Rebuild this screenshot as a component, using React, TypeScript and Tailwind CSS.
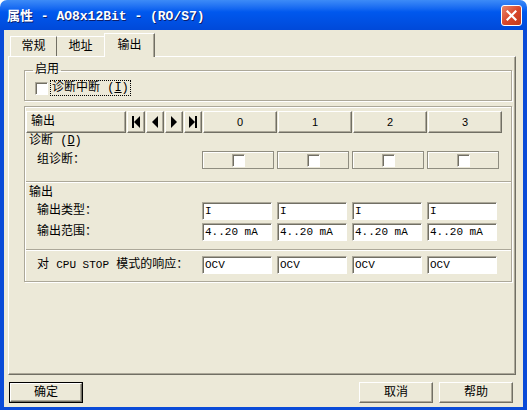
import type { ReactNode } from 'react';

const FONT = "font-['Liberation_Mono','Noto_Sans_CJK_SC',monospace]";

const COLUMNS = ['0', '1', '2', '3'];

function Raised({ children, className = '' }: { children?: ReactNode; className?: string }) {
  return (
    <div
      className={`flex items-center bg-[#ECE9D8] border border-t-white border-l-white border-b-[#716F64] border-r-[#716F64] shadow-[inset_-1px_-1px_0_#ACA899] ${className}`}
    >
      {children}
    </div>
  );
}

function Field({ value }: { value: string }) {
  return (
    <div className="w-[70px] h-[18px] bg-white border border-t-[#ACA899] border-l-[#ACA899] border-b-white border-r-white shadow-[inset_1px_1px_0_#716F64] pl-[2px] flex items-center">
      <span className="font-['Liberation_Mono',monospace] text-[11px] leading-none text-black">{value}</span>
    </div>
  );
}

function CheckBox() {
  return (
    <div className="w-[13px] h-[13px] bg-white border border-t-[#ACA899] border-l-[#ACA899] border-b-white border-r-white shadow-[inset_1px_1px_0_#716F64]" />
  );
}

function NavIcon({ kind }: { kind: 'first' | 'prev' | 'next' | 'last' }) {
  return (
    <svg width="10" height="12" viewBox="0 0 10 12">
      {kind === 'first' && (
        <>
          <rect x="1" y="0" width="2" height="12" fill="#000" />
          <polygon points="9,0 3,6 9,12" fill="#000" />
        </>
      )}
      {kind === 'prev' && <polygon points="8,0 2,6 8,12" fill="#000" />}
      {kind === 'next' && <polygon points="2,0 8,6 2,12" fill="#000" />}
      {kind === 'last' && (
        <>
          <polygon points="1,0 7,6 1,12" fill="#000" />
          <rect x="7" y="0" width="2" height="12" fill="#000" />
        </>
      )}
    </svg>
  );
}

function Row({ label, values, indent = true }: { label: ReactNode; values: string[]; indent?: boolean }) {
  return (
    <div className="grid grid-cols-[176px_75px_75px_75px_75px] h-[18px] items-center">
      <span className={`text-[12px] leading-none ${indent ? 'pl-[11px]' : 'pl-[3px]'}`}>{label}</span>
      {values.map((value, index) => (
        <Field key={index} value={value} />
      ))}
    </div>
  );
}

export default function App() {
  return (
    <div className={`w-[527px] h-[410px] flex flex-col text-black ${FONT} select-none`}>
      {/* title bar */}
      <div className="h-[30px] rounded-t-[7px] bg-gradient-to-b from-[#3D8BF7] via-[#0058EE] via-40% to-[#0049D9] flex items-center pl-[7px] pr-[5px]">
        <span className="flex-1 pt-[2px] text-white font-bold text-[13px] leading-none [text-shadow:1px_1px_0_#0A1E6E]">
          属性 - AO8x12Bit - (RO/S7)
        </span>
        <div className="w-[21px] h-[21px] rounded-[3px] border border-white bg-gradient-to-br from-[#E8856A] via-[#D9472B] to-[#C13A1C] flex items-center justify-center">
          <svg width="11" height="11" viewBox="0 0 11 11">
            <path d="M1.5 1.5 L9.5 9.5 M9.5 1.5 L1.5 9.5" stroke="#fff" strokeWidth="2.2" strokeLinecap="square" />
          </svg>
        </div>
      </div>

      {/* body */}
      <div className="flex-1 bg-[#ECE9D8] border-l-4 border-r-4 border-b-[3px] border-[#0A4BD8] flex flex-col">
        {/* tabs */}
        <div className="h-[24px] mt-[2px] pl-[6px] flex items-end relative z-10">
          <div className="w-[47px] h-[20px] border-t border-l border-white border-r border-r-[#716F64] text-[12px] flex items-center justify-center">
            常规
          </div>
          <div className="w-[47px] h-[20px] border-t border-white text-[12px] flex items-center justify-center">
            地址
          </div>
          <div className="w-[51px] h-[24px] -mb-px bg-[#ECE9D8] border-t border-l border-white border-r border-r-[#716F64] shadow-[inset_-1px_0_0_#ACA899] text-[12px] flex items-start justify-center pt-[3px]">
            输出
          </div>
        </div>

        {/* tab panel */}
        <div className="ml-[4px] w-[508px] h-[319px] border border-t-white border-l-white border-b-[#716F64] border-r-[#716F64] shadow-[inset_-1px_-1px_0_#ACA899] pl-[15px]">
          <fieldset className="mt-[6px] w-[488px] h-[38px] border border-[#ACA899] shadow-[inset_1px_1px_0_white,1px_1px_0_white] px-[10px]">
            <legend className="ml-[-2px] px-[2px] text-[12px] leading-[14px]">启用</legend>
            <div className="flex items-center gap-[3px] mt-[4px]">
              <CheckBox />
              <span className="text-[12px] leading-[14px] outline outline-1 outline-dotted outline-black px-[1px]">
                诊断中断 (<span className="underline">I</span>)
              </span>
            </div>
          </fieldset>

          {/* table frame */}
          <div className="mt-[5px] w-[488px] h-[176px] border border-[#ACA899] shadow-[inset_1px_1px_0_white,1px_1px_0_white] pl-[1px] flex flex-col">
            <div className="h-[74px] pt-[4px]">
              <div className="grid grid-cols-[176px_75px_75px_75px_75px] h-[22px]">
                <div className="flex gap-[1px]">
                  <Raised className="w-[101px] h-[22px] pl-[4px] text-[12px]">输出</Raised>
                  {(['first', 'prev', 'next', 'last'] as const).map((kind) => (
                    <Raised key={kind} className="w-[18px] h-[22px] justify-center">
                      <NavIcon kind={kind} />
                    </Raised>
                  ))}
                </div>
                {COLUMNS.map((column) => (
                  <Raised
                    key={column}
                    className="ml-[1px] w-[74px] h-[22px] justify-center font-['Liberation_Sans',sans-serif] text-[11px]"
                  >
                    {column}
                  </Raised>
                ))}
              </div>
              <div className="h-[16px] flex items-center pl-[3px] text-[12px] leading-none">
                诊断 (<span className="underline">D</span>)
              </div>
              <div className="grid grid-cols-[176px_75px_75px_75px_75px] h-[18px] mt-[2px] items-center">
                <span className="pl-[11px] text-[12px] leading-none">组诊断：</span>
                {COLUMNS.map((column) => (
                  <div
                    key={column}
                    className="w-[72px] h-[18px] border border-[#8F8D80] shadow-[inset_1px_1px_0_white] flex items-center justify-center"
                  >
                    <CheckBox />
                  </div>
                ))}
              </div>
            </div>

            <div className="h-[68px] border-t border-t-[#ACA899] shadow-[inset_0_1px_0_white] pt-[2px]">
              <div className="h-[17px] flex items-center pl-[3px] text-[12px] leading-none">输出</div>
              <div className="mt-[1px]">
                <Row label="输出类型：" values={['I', 'I', 'I', 'I']} />
              </div>
              <div className="mt-[3px]">
                <Row label="输出范围：" values={['4..20 mA', '4..20 mA', '4..20 mA', '4..20 mA']} />
              </div>
            </div>

            <div className="flex-1 border-t border-t-[#ACA899] shadow-[inset_0_1px_0_white] pt-[6px]">
              <Row
                label={
                  <>
                    对 <span className="text-[11px]">CPU STOP</span> 模式的响应：
                  </>
                }
                values={['OCV', 'OCV', 'OCV', 'OCV']}
              />
            </div>
          </div>
        </div>

        {/* dialog buttons */}
        <div className="flex items-center mt-[7px] pl-[5px] pr-[10px]">
          <div className="border border-black">
            <Raised className="w-[72px] h-[19px] justify-center text-[12px]">确定</Raised>
          </div>
          <div className="flex-1" />
          <Raised className="w-[74px] h-[21px] justify-center text-[12px]">取消</Raised>
          <Raised className="ml-[6px] w-[74px] h-[21px] justify-center text-[12px]">帮助</Raised>
        </div>
      </div>
    </div>
  );
}
